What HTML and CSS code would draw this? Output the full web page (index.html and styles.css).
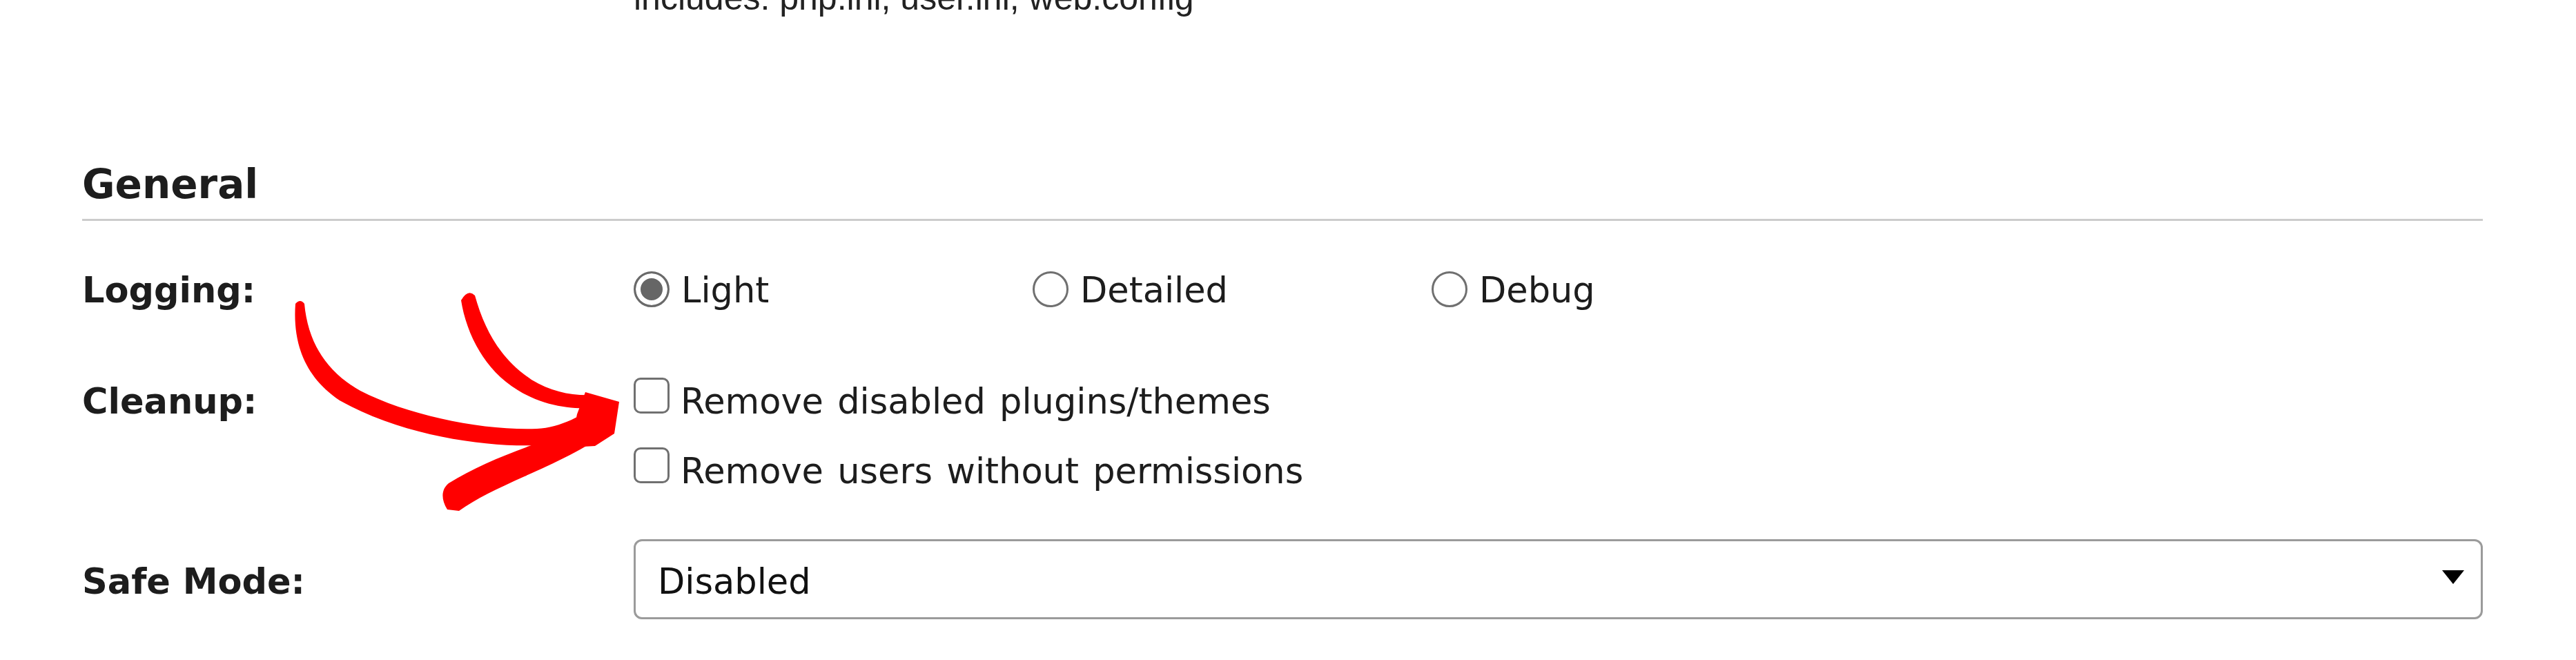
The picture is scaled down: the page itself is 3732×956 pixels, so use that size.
FILE: index.html
```html
<!DOCTYPE html>
<html lang="en">
<head>
<meta charset="utf-8">
<title>General settings</title>
<link rel="stylesheet" href="styles.css">
</head>
<body>
<div class="page">
  <p class="note">includes: php.ini, user.ini, web.config</p>
  <section class="section">
    <h2 class="section-title">General</h2>
    <div class="form">
      <div class="field field-logging">
        <span class="field-label">Logging:</span>
        <div class="field-control">
          <label class="choice choice-radio"><input class="radio" type="radio" name="logging" checked>Light</label><label class="choice choice-radio"><input class="radio" type="radio" name="logging">Detailed</label><label class="choice choice-radio"><input class="radio" type="radio" name="logging">Debug</label>
        </div>
      </div>
      <div class="field field-cleanup">
        <span class="field-label">Cleanup:</span>
        <div class="field-control">
          <label class="choice choice-check"><input class="check" type="checkbox">Remove disabled plugins/themes</label>
          <label class="choice choice-check"><input class="check" type="checkbox">Remove users without permissions</label>
        </div>
      </div>
      <div class="field field-safe">
        <span class="field-label">Safe Mode:</span>
        <div class="field-control">
          <div class="select-wrap">
            <select class="select"><option>Disabled</option><option>Enabled</option></select>
          </div>
        </div>
      </div>
    </div>
  </section>
  <svg class="annotation" viewBox="0 0 3732 956" width="3732" height="956" aria-hidden="true">
    <path class="ink" d="M 428 440 C 424 495, 440 545, 492 580 C 585 632, 705 648, 780 645 C 820 642, 852 622, 882 604 L 872 584 C 845 600, 812 620, 778 621 C 700 624, 592 602, 522 566 C 472 538, 446 495, 441 440 Q 435 432, 428 440 Z"/>
    <path class="ink" d="M 668 435 C 675 480, 700 535, 750 565 C 790 590, 830 592, 862 592 L 862 572 C 830 574, 800 568, 770 550 C 725 520, 702 478, 688 428 Q 678 418, 668 435 Z"/>
    <path class="ink" d="M 848 568 L 897 582 L 890 628 L 862 646 L 826 648 L 836 600 Z"/>
    <path class="ink" d="M 884 622 C 850 650, 800 672, 760 690 C 720 708, 690 722, 665 740 L 648 738 C 638 722, 640 708, 650 700 C 690 675, 740 655, 790 638 C 820 628, 845 618, 866 606 Z"/>
  </svg>
</div>
</body>
</html>
```

FILE: styles.css
```css
html, body {
  margin: 0;
  padding: 0;
  background: #ffffff;
}

body {
  font-family: "DejaVu Sans", Verdana, sans-serif;
  color: #1d1d1d;
  overflow: hidden;
}

.page {
  padding: 0 135px 0 119px;
}

.note {
  margin: -31px 0 0 799px;
  font-family: "Liberation Sans", Arial, sans-serif;
  font-size: 50px;
  line-height: 56px;
  color: #222222;
}

.section-title {
  margin: 208px 0 0;
  padding-bottom: 16px;
  border-bottom: 3px solid #cccccc;
  font-size: 58px;
  line-height: 68px;
  font-weight: bold;
  color: #1d1d1d;
}

.form {
  display: flex;
  flex-direction: column;
}

.field {
  display: grid;
  grid-template-columns: 799px 1fr;
  align-items: baseline;
  font-size: 51px;
}

.field-label {
  font-weight: bold;
  line-height: 60px;
}

.field-logging {
  margin-top: 71px;
  line-height: 60px;
}

.field-cleanup {
  margin-top: 80px;
  line-height: 101px;
}

.field-safe {
  margin-top: 48px;
}

.choice {
  display: inline-block;
  white-space: nowrap;
  word-spacing: 4px;
}

.choice-radio {
  width: 578px;
}

.choice-check {
  display: block;
}

.radio {
  appearance: none;
  -webkit-appearance: none;
  box-sizing: border-box;
  width: 52px;
  height: 52px;
  margin: 0 17px 0 0;
  border: 3px solid #707070;
  border-radius: 50%;
  background: #ffffff;
  vertical-align: -7px;
}

.radio:checked {
  border-color: #6a6a6a;
  background: #666666;
  box-shadow: inset 0 0 0 7px #ffffff;
}

.check {
  appearance: none;
  -webkit-appearance: none;
  box-sizing: border-box;
  width: 52px;
  height: 52px;
  margin: 0 16px 0 0;
  border: 3px solid #707070;
  border-radius: 10px;
  background: #ffffff;
  vertical-align: baseline;
}

.select-wrap {
  position: relative;
}

.select-wrap::after {
  content: "";
  position: absolute;
  right: 27px;
  top: 45px;
  border-left: 16px solid transparent;
  border-right: 16px solid transparent;
  border-top: 20px solid #000000;
  pointer-events: none;
}

.select {
  appearance: none;
  -webkit-appearance: none;
  box-sizing: border-box;
  display: block;
  width: 100%;
  height: 116px;
  margin: 0;
  padding: 6px 80px 0 32px;
  border: 3px solid #9b9b9b;
  border-radius: 12px;
  background: #ffffff;
  font-family: "DejaVu Sans", Verdana, sans-serif;
  font-size: 51px;
  color: #111111;
}

.annotation {
  position: absolute;
  top: 0;
  left: 0;
  pointer-events: none;
}

.ink {
  fill: #ff0000;
}
```
